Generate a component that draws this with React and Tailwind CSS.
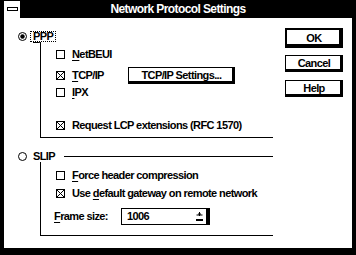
const font = "font-['Liberation_Sans',Arial,sans-serif]";

const CheckBox = ({ checked }) => (
  <svg width="9" height="9" viewBox="0 0 9 9" className="shrink-0">
    <rect x="0.5" y="0.5" width="8" height="8" fill="white" stroke="black" />
    {checked && <path d="M1 1L8 8M8 1L1 8" stroke="black" strokeWidth="1" />}
  </svg>
);

const Radio = ({ checked }) => (
  <svg width="9" height="9" viewBox="0 0 9 9" className="shrink-0">
    <circle cx="4.5" cy="4.5" r="4" fill="white" stroke="black" />
    {checked && <circle cx="4.5" cy="4.5" r="2.2" fill="black" />}
  </svg>
);

const Check = ({ checked, children, className = "" }) => (
  <div className={"flex items-center h-[13px] " + className}>
    <CheckBox checked={checked} />
    <span className="ml-[7px] leading-none whitespace-nowrap">{children}</span>
  </div>
);

const U = ({ children }) => <span className="underline underline-offset-2">{children}</span>;

const Button = ({ children, def, className = "" }) => (
  <div
    className={
      "flex items-center justify-center bg-white border-black leading-none whitespace-nowrap shadow-[inset_-2px_-2px_0_#000] " +
      (def ? "border-2 " : "border ") +
      className
    }
  >
    {children}
  </div>
);

export default function App() {
  return (
    <div className={"w-[356px] h-[255px] bg-black flex flex-col px-[4px] pb-[7px] text-[11px] font-bold tracking-[-0.6px] text-black " + font}>
      {/* title bar */}
      <div className="h-[18px] flex items-center shrink-0">
        <div className="w-[16px] h-[17px] bg-white flex items-center justify-center">
          <div className="w-[11px] h-[4px] border border-black bg-white" />
        </div>
        <div className="flex-1 text-center text-white text-[12px] leading-none pr-[16px]">
          Network Protocol Settings
        </div>
      </div>

      {/* client area */}
      <div className="flex-1 bg-white flex">
        <div className="w-[281px] pl-[14px] flex flex-col">
          {/* PPP */}
          <div className="mt-[13px] h-[11px] flex items-center">
            <Radio checked />
            <span className="ml-[3px] h-[11px] px-[2px] border border-dotted border-black flex items-center leading-none">
              <U>P</U>PP
            </span>
          </div>
          <div className="ml-[22px] w-[233px] border-l border-b border-black pl-[15px] pt-[6px] pb-[5px] flex flex-col">
            <Check>
              <U>N</U>etBEUI
            </Check>
            <div className="mt-[5px] h-[19px] flex items-center">
              <CheckBox checked />
              <span className="ml-[7px] w-[56px] leading-none">
                <U>T</U>CP/IP
              </span>
              <Button className="w-[107px] h-[17px]">
                TCP/IP S<U>e</U>ttings...
              </Button>
            </div>
            <Check className="mt-[1px]">
              <U>I</U>PX
            </Check>
            <Check checked className="mt-[20px]">
              Request LCP extensions (RFC 1570)
            </Check>
          </div>

          {/* SLIP */}
          <div className="mt-[13px] h-[11px] w-[255px] flex items-center">
            <Radio />
            <span className="ml-[6px] leading-none">SLIP</span>
            <div className="ml-[9px] flex-1 h-px bg-black" />
          </div>
          <div className="ml-[22px] w-[233px] h-[74px] border-l border-b border-black pl-[15px] pt-[7px] flex flex-col">
            <Check>
              <U>F</U>orce header compression
            </Check>
            <Check checked className="mt-[5px]">
              Use <U>d</U>efault gateway on remote network
            </Check>
            <div className="mt-[8px] h-[17px] flex items-center -ml-[2px]">
              <span className="w-[67px] leading-none">
                <U>F</U>rame size:
              </span>
              <div className="w-[89px] h-[17px] border border-black flex items-center shadow-[inset_-3px_0_0_#000]">
                <span className="flex-1 pl-[5px] leading-none">1006</span>
                <svg width="9" height="11" viewBox="0 0 9 11" className="mr-[5px]">
                  <path d="M4.5 1V5M1.5 4H7.5M3 3L6 3" stroke="black" strokeWidth="1" fill="none" />
                  <rect x="1" y="8" width="7" height="2" fill="black" />
                </svg>
              </div>
            </div>
          </div>
        </div>

        {/* buttons */}
        <div className="flex flex-col pt-[10px]">
          <Button def className="w-[58px] h-[20px]">OK</Button>
          <Button className="w-[58px] h-[17px] mt-[7px]">Cancel</Button>
          <Button className="w-[58px] h-[17px] mt-[8px]">
            <U>H</U>elp
          </Button>
        </div>
      </div>
    </div>
  );
}
